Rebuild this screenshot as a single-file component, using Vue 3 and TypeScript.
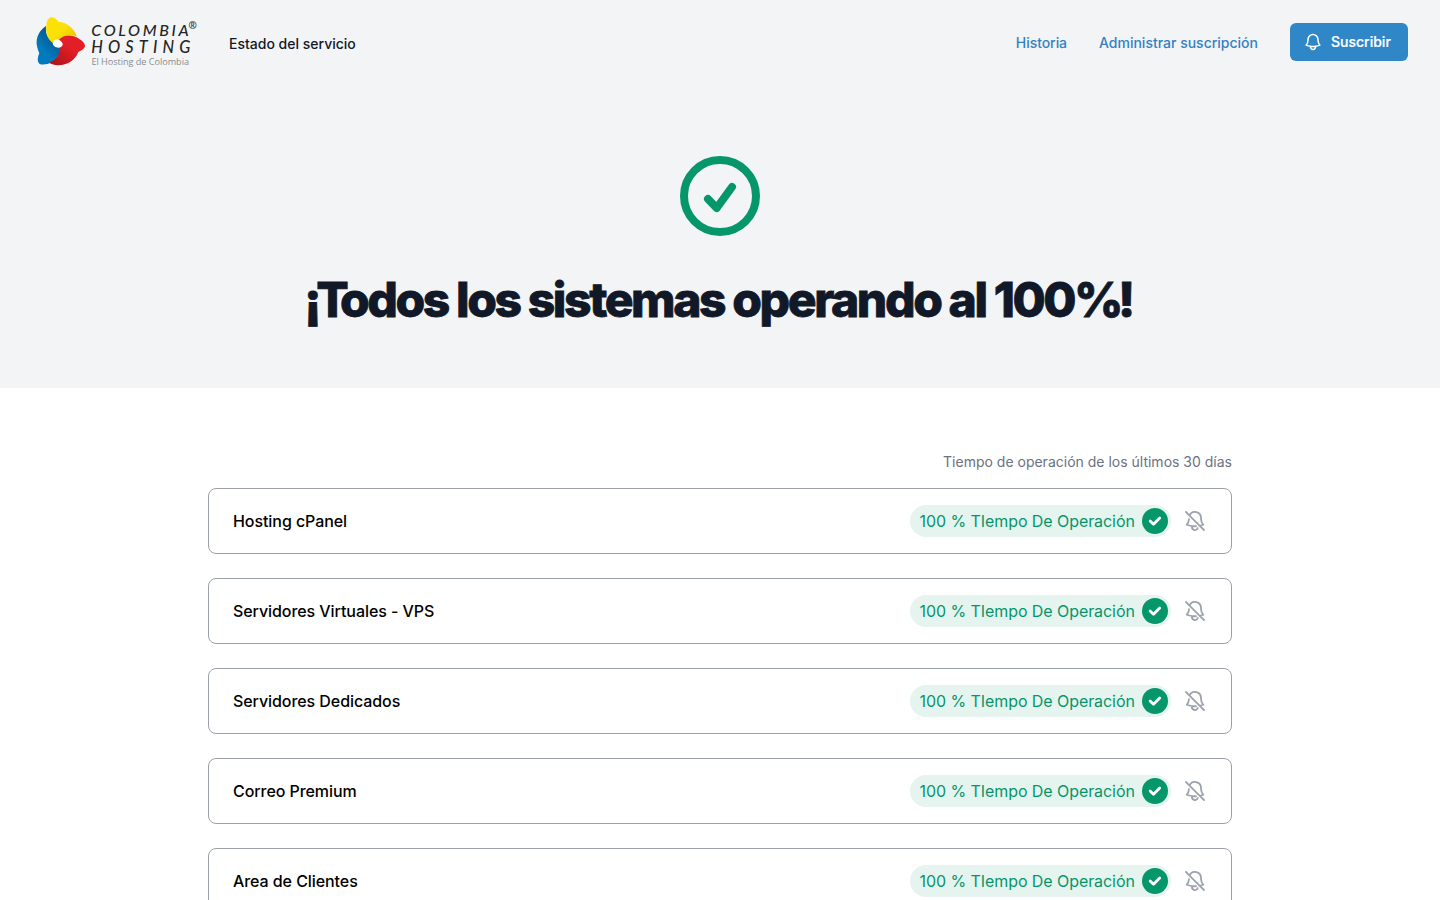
<script setup lang="ts">
interface Service {
  name: string
  uptime: string
}

const services: Service[] = [
  'Hosting cPanel',
  'Servidores Virtuales - VPS',
  'Servidores Dedicados',
  'Correo Premium',
  'Area de Clientes',
].map((name) => ({ name, uptime: '100 % TIempo De Operación' }))
</script>

<template>
  <div class="page">
    <section class="hero">
      <header class="topbar">
        <svg class="logo" width="170" height="64" viewBox="0 0 170 64" role="img" aria-label="Colombia Hosting">
          <defs>
            <linearGradient id="yellow" x1="0" y1="0" x2="1" y2="1">
              <stop offset="0.5" stop-color="#fbe106" /><stop offset="1" stop-color="#e9b800" />
            </linearGradient>
            <linearGradient id="red" x1="1" y1="0" x2="0" y2="1">
              <stop offset="0.4" stop-color="#e31e26" /><stop offset="1" stop-color="#a91119" />
            </linearGradient>
            <linearGradient id="blue" x1="0" y1="1" x2="0.6" y2="0">
              <stop offset="0.4" stop-color="#0079bd" /><stop offset="1" stop-color="#075182" />
            </linearGradient>
          </defs>
          <g transform="scale(.33333)">
            <path fill="#fff" d="M80 78L104 102L87 118L64 112Z" />
            <path fill="url(#blue)" d="M48 48C28 61 18 82 20 103C22 116 25 123 28 130C22 143 21 156 29 162C39 166 53 163 65 157C81 147 92 130 90 113C79 114 67 111 68 94C52 85 46 69 48 48Z" />
            <path fill="url(#yellow)" d="M68 99C52 86 46 69 49 46C50 33 55 24 63 22C72 20 80 28 85 35C111 37 132 53 141 80C121 71 97 78 88 91C81 84 72 88 68 99Z" />
            <path fill="url(#red)" d="M87 89C99 75 124 71 145 85C160 94 168 105 164 112C161 119 152 123 145 126C135 153 106 169 76 165C68 163 60 160 57 158C79 149 90 133 88 113C95 111 99 107 98 101C96 96 92 92 87 89Z" />
          </g>
          <g class="wordmark">
            <text x="61.3" y="25.7" textLength="97.5">COLOMBIA</text>
            <text class="second" x="61.3" y="43.4" textLength="99">HOSTING</text>
          </g>
          <text class="registered" x="158.5" y="18.8">®</text>
          <text class="tagline" x="61.5" y="54.8" textLength="97.5">El Hosting de Colombia</text>
        </svg>
        <span class="site">Estado del servicio</span>
        <nav class="links">
          <a class="history">Historia</a>
          <a>Administrar suscripción</a>
          <button class="subscribe" type="button">
            <svg width="20" height="20" viewBox="0 0 24 24" fill="none" stroke="currentColor" stroke-width="1.8" stroke-linecap="round" stroke-linejoin="round">
              <path d="M14.857 17.082a23.848 23.848 0 005.454-1.31A8.967 8.967 0 0118 9.75V9A6 6 0 006 9v.75a8.967 8.967 0 01-2.312 6.022c1.733.64 3.56 1.085 5.455 1.31m5.714 0a24.255 24.255 0 01-5.714 0m5.714 0a3 3 0 11-5.714 0" />
            </svg>
            <span>Suscribir</span>
          </button>
        </nav>
      </header>
      <svg class="status" width="80" height="80" viewBox="0 0 80 80" fill="none" stroke="#059669" stroke-width="8">
        <circle cx="40" cy="40" r="36" />
        <path d="M28 43L36.7 52L52 31" stroke-linecap="round" stroke-linejoin="round" />
      </svg>
      <h1><span class="kern-mark">¡</span><span class="kern-t">T</span>odos los sistemas operando al 100<span class="kern-percent">%</span>!</h1>
    </section>

    <main class="content">
      <p class="caption">Tiempo de operación de los últimos 30 días</p>
      <ul class="services">
        <li v-for="service in services" :key="service.name" class="card">
          <span class="name">{{ service.name }}</span>
          <span class="pill">
            <span>{{ service.uptime }}</span>
            <svg width="26" height="26" viewBox="0 0 26 26" fill="none">
              <circle cx="13" cy="13" r="13" fill="#059669" />
              <path d="M8.1 13L11.5 16.3L17.7 10.1" stroke="#fff" stroke-width="2.8" stroke-linecap="round" stroke-linejoin="round" />
            </svg>
          </span>
          <svg class="muted" width="24" height="24" viewBox="0 0 24 24" fill="none" stroke="currentColor" stroke-width="1.8" stroke-linecap="round" stroke-linejoin="round">
            <path d="M9.143 17.082a24.248 24.248 0 003.844.148m-3.844-.148a23.856 23.856 0 01-5.455-1.31 8.964 8.964 0 002.3-5.542m3.155 6.852a3 3 0 005.667 1.97m1.965-2.277L21 21m-4.225-4.225a23.81 23.81 0 003.536-1.003A8.967 8.967 0 0118 9.75V9A6 6 0 006.53 6.53m10.245 10.245L6.53 6.53M3 3l3.53 3.53" />
          </svg>
        </li>
      </ul>
    </main>
  </div>
</template>

<style>
body {
  margin: 0;
  background: #fff;
}
</style>

<style scoped>
.page {
  height: 900px;
  overflow: hidden;
  font-family: Inter, "Liberation Sans", sans-serif;
  color: #111827;
}
.hero {
  display: flex;
  flex-direction: column;
  align-items: center;
  height: 388px;
  background: #f3f4f6;
}
.topbar {
  box-sizing: border-box;
  display: flex;
  align-items: center;
  width: 100%;
  height: 84px;
  padding: 0 32px 0 30px;
  font-size: 14px;
  line-height: 20px;
  font-weight: 500;
}
.logo {
  flex: none;
}
.wordmark {
  font: italic 500 16px Lato, sans-serif;
  fill: #242424;
}
.second {
  font-size: 16.3px;
}
.registered {
  font: 700 10px "Open Sans", sans-serif;
  fill: #333;
}
.tagline {
  font: 400 9.2px "Open Sans", sans-serif;
  fill: #8b8d90;
}
.site {
  margin: 4px 0 0 29px;
}
.links {
  display: flex;
  align-items: center;
  gap: 32px;
  margin-left: auto;
}
.links a {
  margin-top: 2px;
  color: #3182c4;
}
.links .history {
  letter-spacing: -0.06px;
}
.subscribe {
  box-sizing: border-box;
  display: flex;
  align-items: center;
  gap: 8px;
  width: 118px;
  height: 38px;
  padding: 0 0 0 13px;
  border: 0;
  border-radius: 6px;
  background: #3087c8;
  color: #fff;
  font: inherit;
  -webkit-text-stroke: 0.2px currentColor;
}
.status {
  flex: none;
  margin-top: 72px;
}
h1 {
  margin: 40px 3px 0 0;
  font-size: 48px;
  line-height: 48px;
  font-weight: 800;
  letter-spacing: -2.4px;
  white-space: nowrap;
  -webkit-text-stroke: 0.8px currentColor;
}
.kern-mark {
  letter-spacing: -5.2px;
}
.kern-t {
  letter-spacing: -8.8px;
}
.kern-percent {
  letter-spacing: -5.6px;
}
.content {
  width: 1024px;
  margin: 0 auto;
  padding-top: 64px;
}
.caption {
  margin: 0 0 16px;
  text-align: right;
  font-size: 14px;
  line-height: 20px;
  color: #6b7280;
}
.services {
  display: flex;
  flex-direction: column;
  gap: 24px;
  margin: 0;
  padding: 0;
  list-style: none;
}
.card {
  box-sizing: border-box;
  display: flex;
  align-items: center;
  height: 66px;
  padding: 0 24px;
  border: 1px solid #9ca0a8;
  border-radius: 8px;
  font-size: 16px;
  line-height: 24px;
  letter-spacing: -0.07px;
}
.name {
  flex: 1;
  font-weight: 500;
  color: #000;
}
.pill {
  box-sizing: border-box;
  display: flex;
  align-items: center;
  justify-content: space-between;
  width: 261px;
  height: 32px;
  padding: 0 3px 0 9.5px;
  border-radius: 16px;
  background: #e6f4f0;
  color: #059669;
  white-space: nowrap;
}
.muted {
  margin-left: 12px;
  color: #9ca3af;
}
</style>
